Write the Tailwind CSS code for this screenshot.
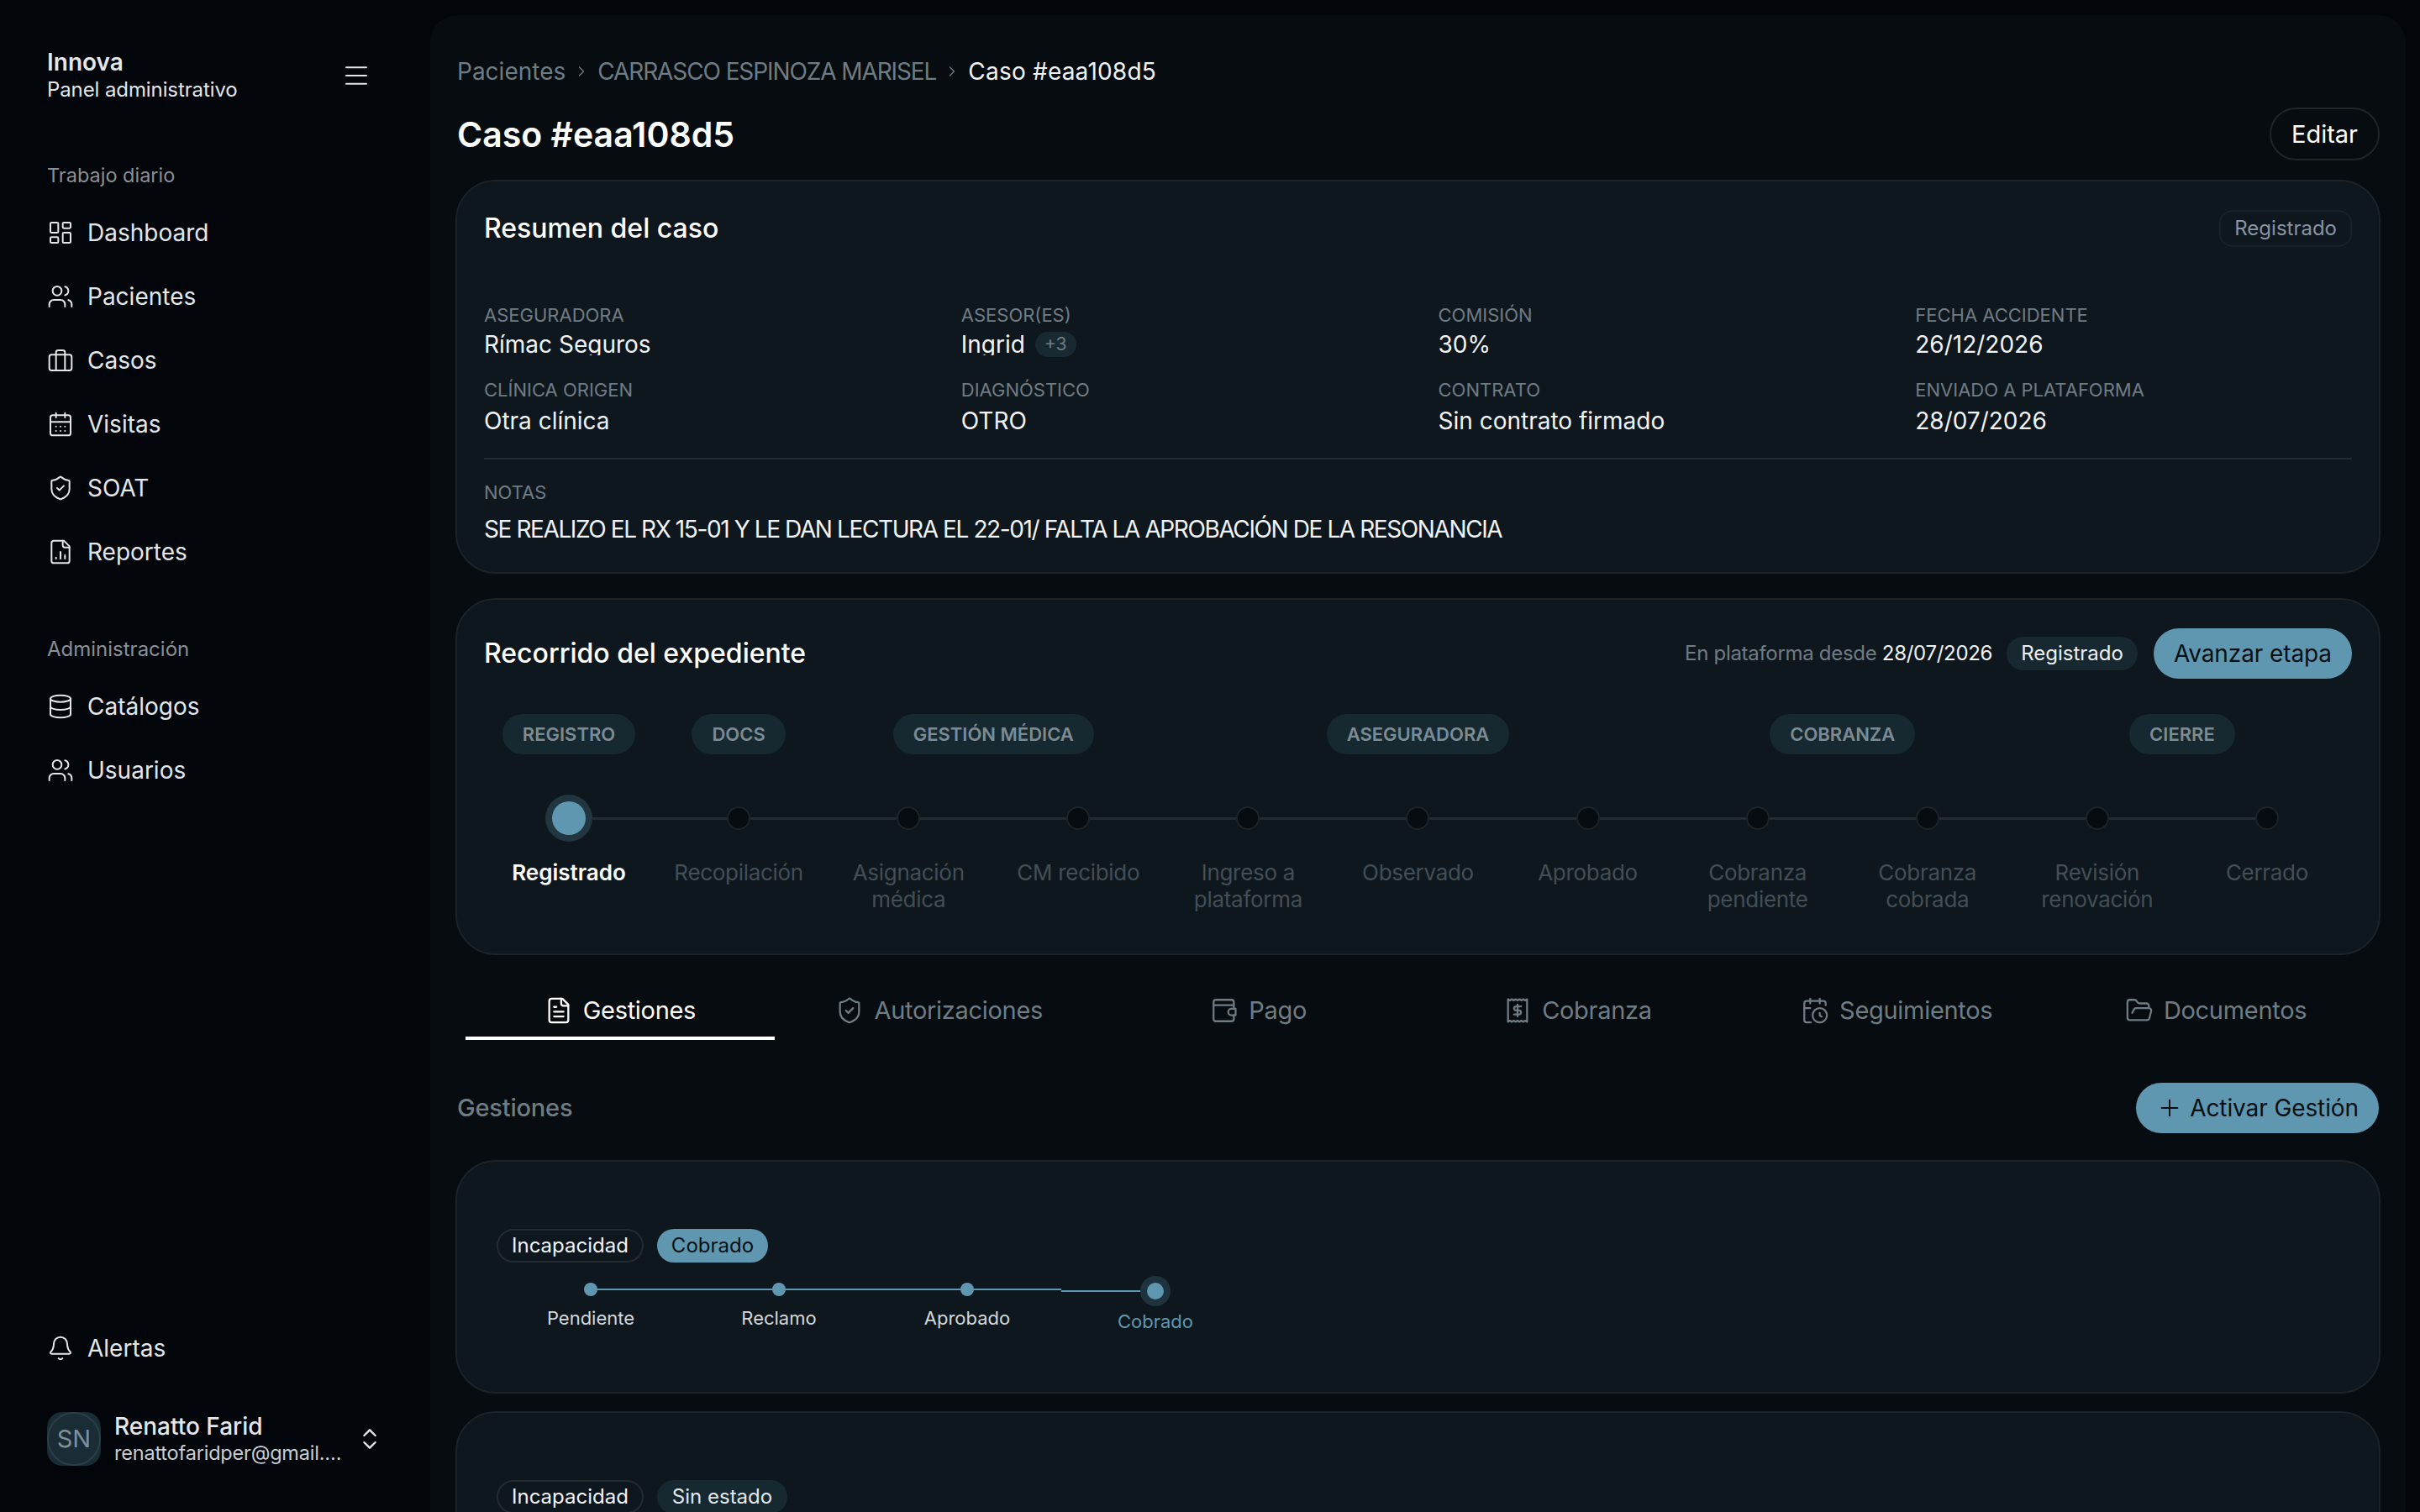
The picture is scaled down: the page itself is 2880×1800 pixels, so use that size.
<!DOCTYPE html>
<html lang="es">
<head>
  <meta charset="UTF-8" />
  <title>Caso #eaa108d5</title>
  <script src="https://cdn.jsdelivr.net/npm/@tailwindcss/browser@4"></script>
</head>
<body class="bg-[#020509] text-[#e9edf0] font-[family-name:Inter,sans-serif] flex h-screen overflow-hidden">
  <!-- sidebar -->
  <aside class="w-[512px] shrink-0 flex flex-col pl-[56px] pr-[56px] pb-[55px] text-[#e3e7ea]">
    <div class="flex items-center justify-between pt-[57px] pr-[14px]">
      <div>
        <div class="text-[28px] leading-[34px] font-semibold">Innova</div>
        <div class="text-[24px] leading-[32px] tracking-[-0.1px]">Panel administrativo</div>
      </div>
      <svg class="w-[36px] h-[36px]" viewBox="0 0 24 24" fill="none" stroke="currentColor" stroke-width="1.25" stroke-linecap="round"><path d="M4 5.5h16M4 12h16M4 18.5h16"/></svg>
    </div>
    <div class="mt-[70px] text-[23.5px] leading-[32px] text-[#8a9095]">Trabajo diario</div>
    <nav class="mt-[14px] flex flex-col text-[28px]">
      <a class="h-[76px] flex items-center gap-[16px]"><svg class="w-[32px] h-[32px]" viewBox="0 0 24 24" fill="none" stroke="currentColor" stroke-width="1.5" stroke-linecap="round" stroke-linejoin="round"><rect x="3" y="3" width="7" height="9" rx="1"/><rect x="14" y="3" width="7" height="5" rx="1"/><rect x="14" y="12" width="7" height="9" rx="1"/><rect x="3" y="16" width="7" height="5" rx="1"/></svg>Dashboard</a>
      <a class="h-[76px] flex items-center gap-[16px]"><svg class="w-[32px] h-[32px]" viewBox="0 0 24 24" fill="none" stroke="currentColor" stroke-width="1.5" stroke-linecap="round" stroke-linejoin="round"><path d="M16 21v-2a4 4 0 0 0-4-4H6a4 4 0 0 0-4 4v2"/><circle cx="9" cy="7" r="4"/><path d="M22 21v-2a4 4 0 0 0-3-3.87"/><path d="M16 3.13a4 4 0 0 1 0 7.75"/></svg>Pacientes</a>
      <a class="h-[76px] flex items-center gap-[16px]"><svg class="w-[32px] h-[32px]" viewBox="0 0 24 24" fill="none" stroke="currentColor" stroke-width="1.5" stroke-linecap="round" stroke-linejoin="round"><rect x="2" y="7" width="20" height="14" rx="2"/><path d="M16 21V5a2 2 0 0 0-2-2h-4a2 2 0 0 0-2 2v16"/></svg>Casos</a>
      <a class="h-[76px] flex items-center gap-[16px]"><svg class="w-[32px] h-[32px]" viewBox="0 0 24 24" fill="none" stroke="currentColor" stroke-width="1.5" stroke-linecap="round" stroke-linejoin="round"><path d="M8 2v4M16 2v4"/><rect x="3" y="4" width="18" height="18" rx="2"/><path d="M3 10h18M8 14h.01M12 14h.01M16 14h.01M8 18h.01M12 18h.01M16 18h.01"/></svg>Visitas</a>
      <a class="h-[76px] flex items-center gap-[16px]"><svg class="w-[32px] h-[32px]" viewBox="0 0 24 24" fill="none" stroke="currentColor" stroke-width="1.5" stroke-linecap="round" stroke-linejoin="round"><path d="M20 13c0 5-3.5 7.5-7.66 8.95a1 1 0 0 1-.67-.01C7.5 20.5 4 18 4 13V6a1 1 0 0 1 1-1c2 0 4.5-1.2 6.24-2.72a1.17 1.17 0 0 1 1.52 0C14.51 3.81 17 5 19 5a1 1 0 0 1 1 1z"/><path d="m9 12 2 2 4-4"/></svg>SOAT</a>
      <a class="h-[76px] flex items-center gap-[16px]"><svg class="w-[32px] h-[32px]" viewBox="0 0 24 24" fill="none" stroke="currentColor" stroke-width="1.5" stroke-linecap="round" stroke-linejoin="round"><path d="M15 2H6a2 2 0 0 0-2 2v16a2 2 0 0 0 2 2h12a2 2 0 0 0 2-2V7z"/><path d="M14 2v4a2 2 0 0 0 2 2h4"/><path d="M8 18v-1M12 18v-6M16 18v-3"/></svg>Reportes</a>
    </nav>
    <div class="mt-[62px] text-[24px] leading-[32px] text-[#8a9095]">Administración</div>
    <nav class="mt-[14px] flex flex-col text-[28px]">
      <a class="h-[76px] flex items-center gap-[16px]"><svg class="w-[32px] h-[32px]" viewBox="0 0 24 24" fill="none" stroke="currentColor" stroke-width="1.5" stroke-linecap="round" stroke-linejoin="round"><ellipse cx="12" cy="5" rx="9" ry="3"/><path d="M3 5v14a9 3 0 0 0 18 0V5"/><path d="M3 12a9 3 0 0 0 18 0"/></svg>Catálogos</a>
      <a class="h-[76px] flex items-center gap-[16px]"><svg class="w-[32px] h-[32px]" viewBox="0 0 24 24" fill="none" stroke="currentColor" stroke-width="1.5" stroke-linecap="round" stroke-linejoin="round"><path d="M16 21v-2a4 4 0 0 0-4-4H6a4 4 0 0 0-4 4v2"/><circle cx="9" cy="7" r="4"/><path d="M22 21v-2a4 4 0 0 0-3-3.87"/><path d="M16 3.13a4 4 0 0 1 0 7.75"/></svg>Usuarios</a>
    </nav>
    <div class="mt-auto">
      <a class="h-[76px] flex items-center gap-[16px] text-[28px]"><svg class="w-[32px] h-[32px]" viewBox="0 0 24 24" fill="none" stroke="currentColor" stroke-width="1.5" stroke-linecap="round" stroke-linejoin="round"><path d="M10.27 21a2 2 0 0 0 3.46 0"/><path d="M3.26 15.33A1 1 0 0 0 4 17h16a1 1 0 0 0 .74-1.67C19.41 13.96 18 12.5 18 8A6 6 0 0 0 6 8c0 4.5-1.41 5.96-2.74 7.33"/></svg>Alertas</a>
      <div class="mt-[38px] flex items-center">
        <div class="w-[64px] h-[64px] rounded-[18px] bg-[#1a2c35] shrink-0">
          <div class="w-full h-full rounded-full border-2 border-[#2c3f47] flex items-center justify-center text-[29px] text-[#7d8f98]">SN</div>
        </div>
        <div class="ml-[16px] w-[272px] min-w-0">
          <div class="text-[28px] leading-[34px] font-medium">Renatto Farid</div>
          <div class="text-[23.5px] leading-[30px] tracking-[-0.2px] truncate text-[#c9ced2]">renattofaridper@gmail.com</div>
        </div>
        <svg class="w-[32px] h-[32px] ml-[16px]" viewBox="0 0 24 24" fill="none" stroke="currentColor" stroke-width="1.75" stroke-linecap="round" stroke-linejoin="round"><path d="m7 15 5 5 5-5M7 9l5-5 5 5"/></svg>
      </div>
    </div>
  </aside>

  <!-- main panel -->
  <main class="w-[2351px] shrink-0 mt-[18px] h-[1782px] overflow-hidden rounded-tl-[32px] rounded-tr-[32px] bg-[#060c0f] px-[30px] pt-[47px]">
    <div class="flex items-center gap-[9px] h-[40px] text-[28px] text-[#6f7c84] pl-[2px]">
      <span>Pacientes</span>
      <svg class="w-[20px] h-[20px]" viewBox="0 0 24 24" fill="none" stroke="currentColor" stroke-width="1.5" stroke-linecap="round" stroke-linejoin="round"><path d="m9 18 6-6-6-6"/></svg>
      <span class="tracking-[-1.1px]">CARRASCO ESPINOZA MARISEL</span>
      <svg class="w-[20px] h-[20px]" viewBox="0 0 24 24" fill="none" stroke="currentColor" stroke-width="1.5" stroke-linecap="round" stroke-linejoin="round"><path d="m9 18 6-6-6-6"/></svg>
      <span class="text-[#f1f3f5] tracking-[0.2px]">Caso #eaa108d5</span>
    </div>
    <div class="mt-[23px] h-[63px] flex items-center justify-between pl-[2px] pr-[1px]">
      <h1 class="pt-[2px] text-[41px] font-semibold text-white">Caso #eaa108d5</h1>
      <button class="h-[63px] px-[24px] rounded-full border-2 border-[#1e262b] text-[29px] text-white">Editar</button>
    </div>

    <!-- resumen -->
    <section class="mt-[23px] h-[469px] rounded-[48px] border-2 border-[#1b2329] bg-[#0f171e] px-[32px] pt-[34px]">
      <div class="flex items-center justify-between h-[44px]">
        <h2 class="text-[32px] font-medium text-white">Resumen del caso</h2>
        <span class="h-[44px] px-[16px] rounded-[16px] border-2 border-[#17212b] flex items-center text-[24px] text-[#8794a3]">Registrado</span>
      </div>
      <div class="mt-[65px] grid grid-cols-4 gap-x-[48px] gap-y-[25px]">
        <div>
          <div class="text-[22px] leading-[32px] text-[#6f7c84]">ASEGURADORA</div>
          <div class="mt-[1px] h-[31px] overflow-hidden text-[28px] leading-[36px] text-[#f1f3f5]">Rímac Seguros</div>
        </div>
        <div>
          <div class="text-[22px] leading-[32px] text-[#6f7c84]">ASESOR(ES)</div>
          <div class="mt-[1px] h-[31px] flex items-start gap-[12px] text-[28px] leading-[36px] text-[#f1f3f5]">
            <span class="h-[31px] overflow-hidden">Ingrid</span>
            <span class="h-[30px] px-[11px] mt-[3px] rounded-full bg-[#182931] text-[21px] leading-[30px] text-[#6f7c84]">+3</span>
          </div>
        </div>
        <div>
          <div class="text-[22px] leading-[32px] text-[#6f7c84]">COMISIÓN</div>
          <div class="mt-[1px] h-[31px] overflow-hidden text-[28px] leading-[36px] text-[#f1f3f5]">30%</div>
        </div>
        <div>
          <div class="text-[22px] leading-[32px] text-[#6f7c84]">FECHA ACCIDENTE</div>
          <div class="mt-[1px] h-[31px] overflow-hidden text-[28px] leading-[36px] text-[#f1f3f5]">26/12/2026</div>
        </div>
        <div>
          <div class="text-[22px] leading-[32px] text-[#6f7c84]">CLÍNICA ORIGEN</div>
          <div class="mt-[3px] h-[36px] text-[28px] leading-[36px] text-[#f1f3f5]">Otra clínica</div>
        </div>
        <div>
          <div class="text-[22px] leading-[32px] text-[#6f7c84]">DIAGNÓSTICO</div>
          <div class="mt-[3px] h-[36px] text-[28px] leading-[36px] text-[#f1f3f5]">OTRO</div>
        </div>
        <div>
          <div class="text-[22px] leading-[32px] text-[#6f7c84]">CONTRATO</div>
          <div class="mt-[3px] h-[36px] text-[28px] leading-[36px] text-[#f1f3f5]">Sin contrato firmado</div>
        </div>
        <div>
          <div class="text-[22px] leading-[32px] text-[#6f7c84]">ENVIADO A PLATAFORMA</div>
          <div class="mt-[3px] h-[36px] text-[28px] leading-[36px] text-[#f1f3f5]">28/07/2026</div>
        </div>
      </div>
      <div class="mt-[26px] border-t-2 border-[#232b31]"></div>
      <div class="mt-[23px] text-[22px] leading-[32px] text-[#6f7c84]">NOTAS</div>
      <div class="mt-[10px] text-[28px] leading-[36px] tracking-[-1.4px] text-[#f1f3f5]">SE REALIZO EL RX 15-01 Y LE DAN LECTURA EL 22-01/ FALTA LA APROBACIÓN DE LA RESONANCIA</div>
    </section>

    <!-- recorrido -->
    <section class="mt-[29px] h-[425px] rounded-[48px] border-2 border-[#1b2329] bg-[#0f171e] px-[32px] pt-[34px]">
      <div class="flex items-center h-[60px]">
        <h2 class="text-[32px] font-medium text-white">Recorrido del expediente</h2>
        <span class="ml-auto text-[24px] tracking-[-0.3px] text-[#6f7c84]">En plataforma desde <span class="text-[#f1f3f5]">28/07/2026</span></span>
        <span class="ml-[17px] h-[40px] px-[17px] rounded-full bg-[#172830] flex items-center text-[24px] text-[#eef1f3]">Registrado</span>
        <button class="ml-[19px] h-[60px] px-[24px] rounded-full bg-[#5f97b0] text-[28px] tracking-[-0.1px] text-[#071015]">Avanzar etapa</button>
      </div>
      <div class="mt-[42px] grid grid-cols-11 text-[22px] font-semibold text-[#7c8b94]">
        <div class="flex justify-center"><span class="h-[48px] px-[24px] rounded-full bg-[#162830] flex items-center">REGISTRO</span></div>
        <div class="flex justify-center"><span class="h-[48px] px-[24px] rounded-full bg-[#162830] flex items-center">DOCS</span></div>
        <div class="col-span-2 flex justify-center"><span class="h-[48px] px-[24px] rounded-full bg-[#162830] flex items-center">GESTIÓN MÉDICA</span></div>
        <div class="col-span-3 flex justify-center"><span class="h-[48px] px-[24px] rounded-full bg-[#162830] flex items-center">ASEGURADORA</span></div>
        <div class="col-span-2 flex justify-center"><span class="h-[48px] px-[24px] rounded-full bg-[#162830] flex items-center">COBRANZA</span></div>
        <div class="col-span-2 flex justify-center"><span class="h-[48px] px-[24px] rounded-full bg-[#162830] flex items-center">CIERRE</span></div>
      </div>
      <div class="mt-[48px] grid grid-cols-11 text-center text-[26px] leading-[32px] tracking-[-0.3px] text-[#434e55]">
        <div>
          <div class="relative h-[56px] flex items-center justify-center">
            <span class="absolute left-1/2 w-full h-[3px] bg-[#232b31]"></span>
            <span class="relative w-[56px] h-[56px] rounded-full bg-[#21363f] flex items-center justify-center"><span class="w-[40px] h-[40px] rounded-full bg-[#5f97b0]"></span></span>
          </div>
          <div class="mt-[21px] font-semibold tracking-normal text-white">Registrado</div>
        </div>
        <div>
          <div class="relative h-[56px] flex items-center justify-center">
            <span class="absolute left-1/2 w-full h-[3px] bg-[#232b31]"></span>
            <span class="relative w-[28px] h-[28px] rounded-full bg-[#060c0f] border-2 border-[#1c2429]"></span>
          </div>
          <div class="mt-[21px]">Recopilación</div>
        </div>
        <div>
          <div class="relative h-[56px] flex items-center justify-center">
            <span class="absolute left-1/2 w-full h-[3px] bg-[#232b31]"></span>
            <span class="relative w-[28px] h-[28px] rounded-full bg-[#060c0f] border-2 border-[#1c2429]"></span>
          </div>
          <div class="mt-[21px]">Asignación<br>médica</div>
        </div>
        <div>
          <div class="relative h-[56px] flex items-center justify-center">
            <span class="absolute left-1/2 w-full h-[3px] bg-[#232b31]"></span>
            <span class="relative w-[28px] h-[28px] rounded-full bg-[#060c0f] border-2 border-[#1c2429]"></span>
          </div>
          <div class="mt-[21px]">CM recibido</div>
        </div>
        <div>
          <div class="relative h-[56px] flex items-center justify-center">
            <span class="absolute left-1/2 w-full h-[3px] bg-[#232b31]"></span>
            <span class="relative w-[28px] h-[28px] rounded-full bg-[#060c0f] border-2 border-[#1c2429]"></span>
          </div>
          <div class="mt-[21px]">Ingreso a<br>plataforma</div>
        </div>
        <div>
          <div class="relative h-[56px] flex items-center justify-center">
            <span class="absolute left-1/2 w-full h-[3px] bg-[#232b31]"></span>
            <span class="relative w-[28px] h-[28px] rounded-full bg-[#060c0f] border-2 border-[#1c2429]"></span>
          </div>
          <div class="mt-[21px]">Observado</div>
        </div>
        <div>
          <div class="relative h-[56px] flex items-center justify-center">
            <span class="absolute left-1/2 w-full h-[3px] bg-[#232b31]"></span>
            <span class="relative w-[28px] h-[28px] rounded-full bg-[#060c0f] border-2 border-[#1c2429]"></span>
          </div>
          <div class="mt-[21px]">Aprobado</div>
        </div>
        <div>
          <div class="relative h-[56px] flex items-center justify-center">
            <span class="absolute left-1/2 w-full h-[3px] bg-[#232b31]"></span>
            <span class="relative w-[28px] h-[28px] rounded-full bg-[#060c0f] border-2 border-[#1c2429]"></span>
          </div>
          <div class="mt-[21px]">Cobranza<br>pendiente</div>
        </div>
        <div>
          <div class="relative h-[56px] flex items-center justify-center">
            <span class="absolute left-1/2 w-full h-[3px] bg-[#232b31]"></span>
            <span class="relative w-[28px] h-[28px] rounded-full bg-[#060c0f] border-2 border-[#1c2429]"></span>
          </div>
          <div class="mt-[21px]">Cobranza<br>cobrada</div>
        </div>
        <div>
          <div class="relative h-[56px] flex items-center justify-center">
            <span class="absolute left-1/2 w-full h-[3px] bg-[#232b31]"></span>
            <span class="relative w-[28px] h-[28px] rounded-full bg-[#060c0f] border-2 border-[#1c2429]"></span>
          </div>
          <div class="mt-[21px]">Revisión<br>renovación</div>
        </div>
        <div>
          <div class="relative h-[56px] flex items-center justify-center">
            <span class="relative w-[28px] h-[28px] rounded-full bg-[#060c0f] border-2 border-[#1c2429]"></span>
          </div>
          <div class="mt-[21px]">Cerrado</div>
        </div>
      </div>
    </section>

    <!-- tabs -->
    <div class="mt-[33px] grid grid-cols-6 h-[68px] px-[6px] text-[29px] tracking-[-0.3px] text-[#6f7c84]">
      <a class="mx-[6px] pt-[2px] flex items-center justify-center gap-[12px] border-b-4 border-white text-white"><svg class="w-[34px] h-[34px]" viewBox="0 0 24 24" fill="none" stroke="currentColor" stroke-width="1.6" stroke-linecap="round" stroke-linejoin="round"><path d="M15 2H6a2 2 0 0 0-2 2v16a2 2 0 0 0 2 2h12a2 2 0 0 0 2-2V7z"/><path d="M14 2v4a2 2 0 0 0 2 2h4"/><path d="M10 9H8M16 13H8M16 17H8"/></svg>Gestiones</a>
      <a class="mx-[6px] pt-[2px] flex items-center justify-center gap-[12px] border-b-4 border-transparent"><svg class="w-[34px] h-[34px]" viewBox="0 0 24 24" fill="none" stroke="currentColor" stroke-width="1.6" stroke-linecap="round" stroke-linejoin="round"><path d="M20 13c0 5-3.5 7.5-7.66 8.95a1 1 0 0 1-.67-.01C7.5 20.5 4 18 4 13V6a1 1 0 0 1 1-1c2 0 4.5-1.2 6.24-2.72a1.17 1.17 0 0 1 1.52 0C14.51 3.81 17 5 19 5a1 1 0 0 1 1 1z"/><path d="m9 12 2 2 4-4"/></svg>Autorizaciones</a>
      <a class="mx-[6px] pt-[2px] flex items-center justify-center gap-[12px] border-b-4 border-transparent"><svg class="w-[34px] h-[34px]" viewBox="0 0 24 24" fill="none" stroke="currentColor" stroke-width="1.6" stroke-linecap="round" stroke-linejoin="round"><path d="M20 10V5a2 2 0 0 0-2-2H5a2 2 0 0 0-2 2v14a2 2 0 0 0 2 2h13a2 2 0 0 0 2-2v-3"/><path d="M3 7.5h17"/><path d="M21.5 10.5H18a2.7 2.7 0 0 0 0 5.4h3.5z"/></svg>Pago</a>
      <a class="mx-[6px] pt-[2px] flex items-center justify-center gap-[12px] border-b-4 border-transparent"><svg class="w-[34px] h-[34px]" viewBox="0 0 24 24" fill="none" stroke="currentColor" stroke-width="1.6" stroke-linecap="round" stroke-linejoin="round"><path d="M4 2.5v19l1.6-1 1.6 1 1.6-1 1.6 1 1.6-1 1.6 1 1.6-1 1.6 1 1.6-1 1.6 1v-19l-1.6 1-1.6-1-1.6 1-1.6-1-1.6 1-1.6-1-1.6 1-1.6-1-1.6 1z"/><path d="M15 8.5h-4.2a1.6 1.6 0 0 0 0 3.4h2.4a1.6 1.6 0 0 1 0 3.4H9"/><path d="M12 7v10"/></svg>Cobranza</a>
      <a class="mx-[6px] pt-[2px] flex items-center justify-center gap-[12px] border-b-4 border-transparent"><svg class="w-[34px] h-[34px]" viewBox="0 0 24 24" fill="none" stroke="currentColor" stroke-width="1.6" stroke-linecap="round" stroke-linejoin="round"><path d="M21 7.5V6a2 2 0 0 0-2-2H5a2 2 0 0 0-2 2v14a2 2 0 0 0 2 2h3.5"/><path d="M16 2v4M8 2v4M3 10h5"/><path d="M16 14v2.2l1.6 1"/><circle cx="16" cy="16" r="6"/></svg>Seguimientos</a>
      <a class="mx-[6px] pt-[2px] flex items-center justify-center gap-[12px] border-b-4 border-transparent"><svg class="w-[34px] h-[34px]" viewBox="0 0 24 24" fill="none" stroke="currentColor" stroke-width="1.6" stroke-linecap="round" stroke-linejoin="round"><path d="m6 14 1.5-2.9A2 2 0 0 1 9.24 10H20a2 2 0 0 1 1.94 2.5l-1.54 6a2 2 0 0 1-1.95 1.5H4a2 2 0 0 1-2-2V5a2 2 0 0 1 2-2h3.9a2 2 0 0 1 1.69.9l.81 1.2a2 2 0 0 0 1.67.9H18a2 2 0 0 1 2 2v2"/></svg>Documentos</a>
    </div>

    <!-- gestiones -->
    <div class="mt-[51px] h-[60px] flex items-center justify-between pl-[2px] pr-[2px]">
      <h3 class="text-[29px] font-medium tracking-[-0.2px] text-[#6f7c84]">Gestiones</h3>
      <button class="h-[60px] px-[24px] rounded-full bg-[#5f97b0] text-[28px] tracking-[-0.1px] text-[#071015] flex items-center gap-[8px]"><svg class="w-[32px] h-[32px]" viewBox="0 0 24 24" fill="none" stroke="currentColor" stroke-width="1.5" stroke-linecap="round"><path d="M5 12h14M12 5v14"/></svg>Activar Gestión</button>
    </div>

    <section class="mt-[32px] h-[278px] rounded-[48px] border-2 border-[#1b2329] bg-[#0f171e] pl-[47px] pt-[80px]">
      <div class="flex gap-[16px] text-[24px]">
        <span class="h-[40px] px-[16px] rounded-full border-2 border-[#232b31] flex items-center text-[#f1f3f5]">Incapacidad</span>
        <span class="h-[40px] px-[17px] rounded-full bg-[#5f97b0] flex items-center text-[#071015]">Cobrado</span>
      </div>
      <div class="mt-[16px] grid grid-cols-[repeat(4,224px)] text-center text-[22px] leading-[32px] text-[#d3d8dc]">
        <div class="relative pt-[8px]">
          <span class="absolute left-1/2 right-0 top-[15px] h-[2px] bg-[#5f97b0]"></span>
          <span class="relative block mx-auto w-[16px] h-[16px] rounded-full bg-[#5f97b0]"></span>
          <div class="mt-[10px]">Pendiente</div>
        </div>
        <div class="relative pt-[8px]">
          <span class="absolute left-0 right-0 top-[15px] h-[2px] bg-[#5f97b0]"></span>
          <span class="relative block mx-auto w-[16px] h-[16px] rounded-full bg-[#5f97b0]"></span>
          <div class="mt-[10px]">Reclamo</div>
        </div>
        <div class="relative pt-[8px]">
          <span class="absolute left-0 right-0 top-[15px] h-[2px] bg-[#5f97b0]"></span>
          <span class="relative block mx-auto w-[16px] h-[16px] rounded-full bg-[#5f97b0]"></span>
          <div class="mt-[10px]">Aprobado</div>
        </div>
        <div class="relative">
          <span class="absolute left-0 right-1/2 top-[17px] h-[2px] bg-[#5f97b0]"></span>
          <span class="relative mx-auto w-[36px] h-[36px] rounded-full bg-[#1e333d] flex items-center justify-center"><span class="w-[20px] h-[20px] rounded-full bg-[#5f97b0]"></span></span>
          <div class="mt-[2px] text-[#5f97b0]">Cobrado</div>
        </div>
      </div>
    </section>

    <section class="mt-[21px] h-[278px] rounded-[48px] border-2 border-[#1b2329] bg-[#0f171e] pl-[47px] pt-[80px]">
      <div class="flex gap-[16px] text-[24px]">
        <span class="h-[40px] px-[16px] rounded-full border-2 border-[#232b31] flex items-center text-[#f1f3f5]">Incapacidad</span>
        <span class="h-[40px] px-[18px] rounded-full bg-[#162830] flex items-center text-[#e3e7ea]">Sin estado</span>
      </div>
    </section>
  </main>
</body>
</html>
